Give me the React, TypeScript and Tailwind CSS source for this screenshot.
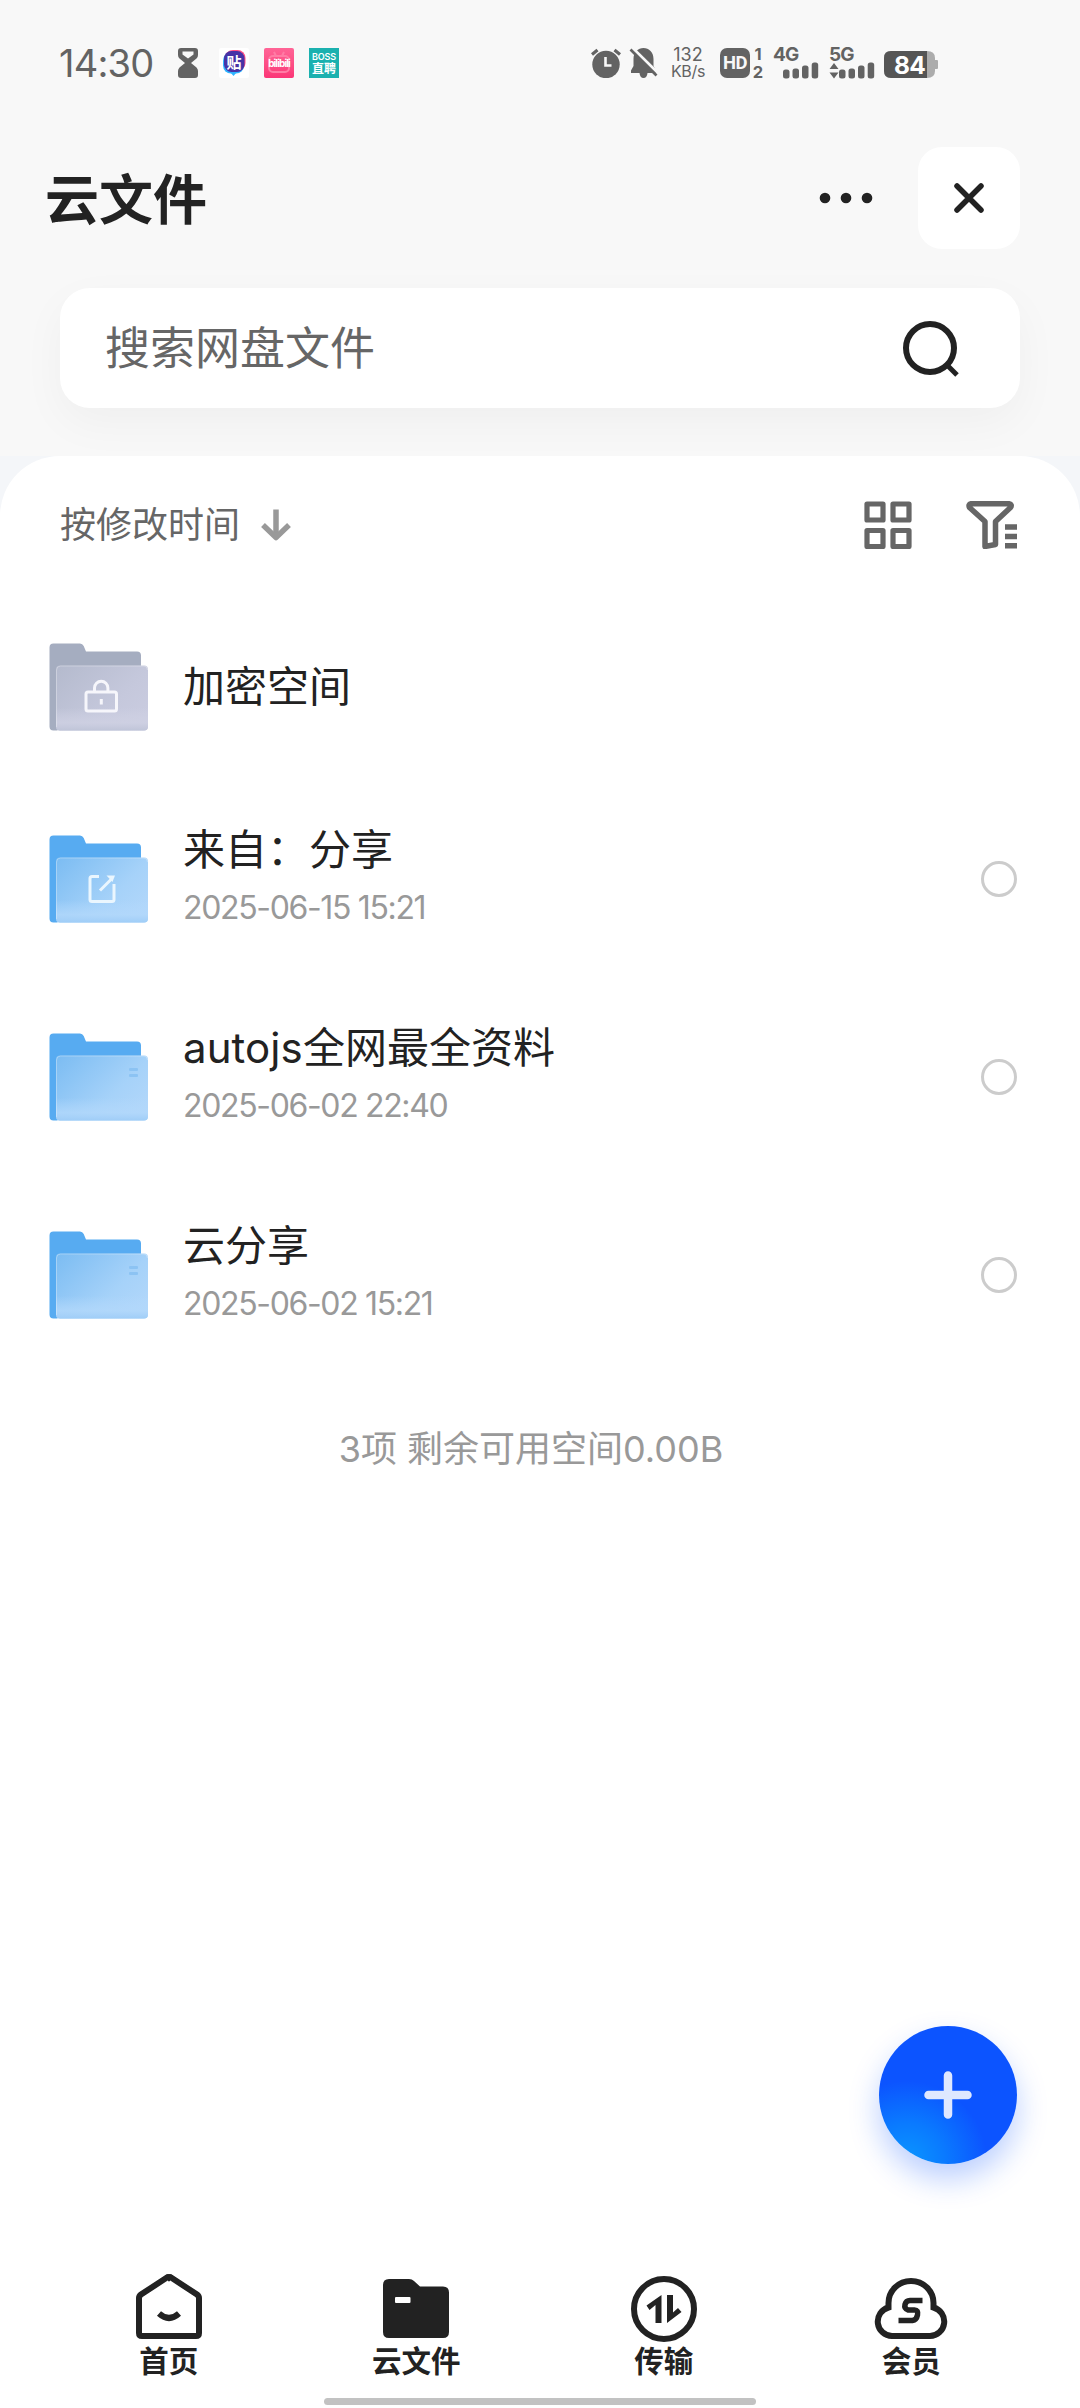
import React from "react";

const CJK = "font-['Inter','Noto_Sans_CJK_SC',sans-serif]";

function SignalBars() {
  return (
    <svg width="36" height="18" viewBox="0 0 36 18" fill="#636363">
      <rect x="0" y="8.5" width="6.5" height="9" rx="2.5" />
      <rect x="9.5" y="7.5" width="6.5" height="10" rx="2.5" />
      <rect x="19" y="4.5" width="6.5" height="13" rx="2.5" />
      <rect x="28.7" y="1.5" width="6.5" height="16" rx="2.5" />
    </svg>
  );
}

function StatusBar() {
  return (
    <div className="flex h-[126px] shrink-0 items-center text-[#636363]">
      <span className="ml-[59px] w-[119px] text-[38px] leading-[38px] tracking-[-0.8px]">14:30</span>
      <svg width="20" height="30" viewBox="0 0 20 30" fill="#636363">
        <path
          fillRule="evenodd"
          d="M3 0H17Q20 0 20 3V7Q20 9 18.500 10.500L13 15L18.500 19.500Q20 21 20 23V27Q20 30 17 30H3Q0 30 0 27V23Q0 21 1.500 19.500L7 15L1.500 10.500Q0 9 0 7V3Q0 0 3 0ZM4.500 3.500V6.500L10 10.500L15.500 6.500V3.500Z"
        />
      </svg>
      <div className="relative ml-[21px] flex size-[30px] items-center justify-center rounded-[2px] bg-white">
        <svg className="absolute inset-0" width="30" height="30" viewBox="0 0 30 30">
          <rect x="6" y="2" width="20.500" height="21" rx="8" fill="#ff4e86" />
          <rect x="4" y="4.500" width="21" height="21" rx="8" fill="#2fb4ff" />
          <path d="M11 24H18L14.500 28Z" fill="#2fb4ff" />
          <rect x="5" y="3" width="20.500" height="21" rx="7.500" fill="#4733a6" />
        </svg>
        <span className="relative -top-px text-[15px] font-bold leading-none text-white">贴</span>
      </div>
      <div className="relative ml-[15px] flex size-[30px] items-center justify-center rounded-[2px] bg-linear-to-b from-[#ff6496] to-[#fb3577]">
        <svg className="absolute inset-0" width="30" height="30" viewBox="0 0 30 30" fill="none" stroke="#ff7ca5" strokeWidth="2">
          <rect x="5" y="8" width="20" height="16" rx="4" />
          <path d="M10 4L12 8M20 4L18 8" />
        </svg>
        <span className="relative text-[10px] font-bold leading-none tracking-[-0.9px] text-white">bilibili</span>
      </div>
      <div className="ml-[15px] flex size-[30px] flex-col items-center justify-center bg-[#1bb1af] text-white">
        <span className="text-[9px] font-semibold leading-[11px] tracking-[-0.1px]">BOSS</span>
        <span className="text-[12px] font-bold leading-[13px]">直聘</span>
      </div>

      <svg className="ml-[252px]" width="30" height="30" viewBox="0 0 30 30">
        <circle cx="15" cy="16.500" r="13.700" fill="#636363" />
        <path d="M1 6.500L6.500 2M29 6.500L23.500 2" stroke="#636363" strokeWidth="3.200" />
        <path d="M14.500 9V17.500H20.500" fill="none" stroke="#f8f8f8" strokeWidth="2.600" />
      </svg>
      <svg className="ml-2" width="30" height="30" viewBox="0 0 30 30">
        <path d="M4.500 11C4.500 4 9 0 14.500 0S24.500 4 24.500 11V18L27 22.500V25H18.500Q18 30 14.500 30T10.500 25H2V22.500L4.500 18Z" fill="#636363" />
        <path d="M3.500 0L31 27" stroke="#f8f8f8" strokeWidth="3" />
        <path d="M1.500 1.500L27.500 27.500" stroke="#636363" strokeWidth="2.600" />
      </svg>
      <div className="ml-[9px] flex w-[40px] flex-col items-center">
        <span className="text-[18px] leading-[17px]">132</span>
        <span className="text-[16px] leading-[17px] tracking-[-0.3px]">KB/s</span>
      </div>
      <div className="ml-[12px] flex size-[30px] items-center justify-center rounded-[7px] bg-[#636363] font-['Roboto',sans-serif] text-[18.5px] font-bold leading-none tracking-[-0.5px] text-[#f8f8f8]">
        HD
      </div>
      <div className="ml-[2px] flex w-[12px] flex-col items-center text-[16.5px] font-bold leading-[18px]">
        <span>1</span>
        <span>2</span>
      </div>
      <div className="ml-[9px] flex h-[34px] w-[47px] flex-col">
        <span className="h-[17px] text-[19px] font-bold leading-[17px] tracking-[-0.8px]">4G</span>
        <span className="-mt-[2px] pl-[10px]">
          <SignalBars />
        </span>
      </div>
      <div className="ml-[9px] flex h-[34px] w-[48px] flex-col">
        <span className="h-[17px] text-[19px] font-bold leading-[17px] tracking-[-0.8px]">5G</span>
        <span className="-mt-[2px] flex">
          <svg width="10" height="18" viewBox="0 0 10 18" fill="#636363">
            <path d="M0.500 8L5 2L9.500 8ZM0.500 11.500H9.500L5 17.500Z" />
          </svg>
          <SignalBars />
        </span>
      </div>
      <div className="relative ml-[7px] mt-[3px] flex h-[27px] w-[54px]">
        <svg className="absolute inset-0" width="54" height="27" viewBox="0 0 54 27">
          <path d="M7 0H43Q51 0 51 7V9H53Q54 9 54 10V17Q54 18 53 18H51V20Q51 27 43 27H7Q0 27 0 20V7Q0 0 7 0Z" fill="#acacac" />
          <path d="M7 0H43V27H7Q0 27 0 20V7Q0 0 7 0Z" fill="#555" />
        </svg>
        <span className="relative ml-[10px] text-[24.5px] font-bold leading-[28px] tracking-[-0.8px] text-white">84</span>
      </div>
    </div>
  );
}

type FolderKind = "lock" | "share" | "plain";

function FolderIcon({ kind, id }: { kind: FolderKind; id: string }) {
  const grey = kind === "lock";
  return (
    <svg width="100" height="88" viewBox="0 0 100 88">
      <defs>
        <linearGradient id={id} x1="0" y1="0" x2="1" y2="0.700">
          <stop offset="0" stopColor={grey ? "#b4bacd" : "#7bbcf2"} />
          <stop offset="0.700" stopColor={grey ? "#c5c8dc" : "#a6d2f9"} />
          <stop offset="1" stopColor={grey ? "#c9cbdf" : "#b0d6fa"} />
        </linearGradient>
        <linearGradient id={id + "-sheen"} x1="0" y1="0" x2="0" y2="1">
          <stop offset="0.650" stopColor={grey ? "#d3d5e6" : "#b4d9fc"} stopOpacity="0" />
          <stop offset="0.880" stopColor={grey ? "#cfd1e3" : "#b2d8fb"} stopOpacity="0.800" />
          <stop offset="1" stopColor={grey ? "#bfc4d8" : "#9fcdf7"} />
        </linearGradient>
      </defs>
      <path
        d="M4.500 0.500H31Q33.500 0.500 34.700 3L37 8.500H88Q92 8.500 92 12.500V50L8 87.500H4.500Q0.500 87.500 0.500 83.500V4.500Q0.500 0.500 4.500 0.500Z"
        fill={grey ? "#a5adc0" : "#57abf1"}
      />
      <rect x="7" y="22.500" width="92" height="65" rx="4" fill={`url(#${id})`} />
      <rect x="7" y="22.500" width="92" height="65" rx="4" fill={`url(#${id}-sheen)`} />
      <path d="M7.500 84V27Q7.500 23 11.500 23H95Q98.500 23 98.500 27" fill="none" stroke="#ffffff" strokeOpacity="0.300" />
      {kind === "lock" && (
        <g fill="none" stroke="#f6f6fb" strokeWidth="3">
          <rect x="37" y="49" width="30.500" height="19" rx="2" />
          <path d="M45.500 49V45A6.700 6.700 0 0 1 58.900 45V49M52.300 56V61.500" />
        </g>
      )}
      {kind === "share" && (
        <g fill="none" stroke="#eaf6fe" strokeWidth="3">
          <path d="M50 41.500H43Q41 41.500 41 43.500V64.500Q41 66.500 43 66.500H63Q65 66.500 65 64.500V49" />
          <path d="M51 55.500L63 43.500" />
          <path d="M57.500 40.500H66L63.500 47Z" fill="#eaf6fe" stroke="none" />
        </g>
      )}
      {kind === "plain" && (
        <g fill="#8cc3f3">
          <rect x="80" y="35" width="9" height="3" rx="1" />
          <rect x="80" y="41" width="9" height="3" rx="1" />
        </g>
      )}
    </svg>
  );
}

function FileRow({ id, kind, latin, name, date }: { id: string; kind: FolderKind; latin?: string; name: string; date: string }) {
  return (
    <div className="flex h-[198px] items-center pl-[49px] pr-[63px]">
      <FolderIcon kind={kind} id={id} />
      <div className="mb-[6px] ml-[34px] flex flex-1 flex-col">
        <span className="text-[42px] leading-[56px] text-[#222]">
          {latin && <span className="tracking-[0.1px]">{latin}</span>}
          {name}
        </span>
        <span className="mt-[8px] text-[32px] leading-[44px] tracking-[-1.35px] text-[#999]">{date}</span>
      </div>
      <span className="size-[36px] rounded-full border-[3.5px] border-[#ccc]" />
    </div>
  );
}

function Tab({ label, children }: { label: string; children: React.ReactNode }) {
  return (
    <div className="flex w-[247.500px] flex-col items-center text-[#222]">
      <svg width="74" height="72" viewBox="0 0 74 72" fill="none" stroke="#222" strokeWidth="6">
        {children}
      </svg>
      <span className="text-[29.500px] font-bold leading-[38px]">{label}</span>
    </div>
  );
}

export default function App() {
  return (
    <div className={`relative flex h-[2408px] w-[1080px] flex-col overflow-hidden bg-[#f8f8f8] ${CJK}`}>
      <StatusBar />

      <header className="mt-[21px] flex h-[102px] shrink-0 items-center pl-[45px] pr-[60px]">
        <h1 className="mt-[6px] flex-1 text-[54px] font-bold leading-[80px] text-[#222]">云文件</h1>
        <svg width="56" height="12" viewBox="0 0 56 12" fill="#222">
          <circle cx="7" cy="6" r="5.300" />
          <circle cx="28" cy="6" r="5.300" />
          <circle cx="49" cy="6" r="5.300" />
        </svg>
        <button className="ml-[44px] flex size-[102px] items-center justify-center rounded-[24px] bg-white">
          <svg width="32" height="32" viewBox="0 0 32 32" stroke="#222" strokeWidth="5.500" strokeLinecap="round">
            <path d="M4 4L28 28M28 4L4 28" />
          </svg>
        </button>
      </header>

      <div className="mx-[60px] mt-[39px] flex h-[120px] shrink-0 items-center justify-between rounded-[30px] bg-white pl-[45px] pr-[58px] shadow-[0_15px_45px_rgba(0,0,0,0.04)]">
        <span className="mt-[2px] text-[45px] leading-[66px] text-[#666]">搜索网盘文件</span>
        <svg width="60" height="60" viewBox="0 0 60 60" fill="none" stroke="#222" strokeWidth="6">
          <circle cx="28" cy="30" r="24" />
          <path d="M45 47L55 57" strokeWidth="5" />
        </svg>
      </div>

      <div className="mt-[48px] flex flex-1 flex-col bg-[#f4f6f9]">
        <main className="flex flex-1 flex-col rounded-t-[60px] bg-white">
          <div className="flex h-[138px] items-center pl-[60px] pr-[62px]">
            <span className="text-[36px] leading-[52px] text-[#666]">按修改时间</span>
            <svg className="ml-[20px]" width="32" height="34" viewBox="0 0 32 34" fill="none" stroke="#999" strokeWidth="5.500">
              <path d="M16 1.500V29" />
              <path d="M3 17L16 29.500L29 17" strokeLinejoin="round" />
            </svg>
            <div className="flex-1" />
            <svg width="48" height="48" viewBox="0 0 48 48" fill="none" stroke="#666" strokeWidth="5.200" strokeLinejoin="round">
              <rect x="3" y="3" width="16" height="16" />
              <rect x="29" y="3" width="16" height="16" />
              <rect x="3" y="29.500" width="16" height="16" />
              <rect x="29" y="29.500" width="16" height="16" />
            </svg>
            <svg className="ml-[54px]" width="52" height="48" viewBox="0 0 52 48" fill="none" stroke="#666" strokeWidth="5.500" strokeLinejoin="round">
              <path d="M5 2.800H43Q46.500 3.500 44.500 6.500L29.500 20.500V43.500L19 45.500V20.500L3.500 6.500Q2 3.500 5 2.800Z" />
              <path d="M39 26H51M39 35.500H51M39 44.700H51" />
            </svg>
          </div>

          <div className="flex h-[186px] items-center pl-[49px]">
            <FolderIcon kind="lock" id="f-lock" />
            <span className="ml-[34px] text-[42px] leading-[56px] text-[#222]">加密空间</span>
          </div>
          <FileRow id="f-share" kind="share" name="来自：分享" date="2025-06-15 15:21" />
          <FileRow id="f-auto" kind="plain" latin="autojs" name="全网最全资料" date="2025-06-02 22:40" />
          <FileRow id="f-cloud" kind="plain" name="云分享" date="2025-06-02 15:21" />

          <p className="flex h-[150px] items-center justify-center pr-[18px] text-[36px] text-[#999]">3项 剩余可用空间0.00B</p>
          <div className="flex-1" />

          <nav className="flex h-[138px] justify-center">
            <Tab label="首页">
              <path d="M37 7.500Q38 6.500 39 7.500L65 24.500Q67 26 67 28V63Q67 66 64 66H10Q7 66 7 63V28Q7 26 9 24.500L35 7.500Q36 6.500 37 7.500Z" />
              <path d="M27 43.500Q37 52.500 47 43.500" />
            </Tab>
            <Tab label="云文件">
              <path
                d="M10 9H30Q33 9 35 11L41 16.500H64Q70 16.500 70 22.500V62Q70 68 64 68H10Q4 68 4 62V15Q4 9 10 9Z"
                fill="#222"
                stroke="none"
              />
              <rect x="16" y="27" width="15.500" height="6" rx="1" fill="#fff" stroke="none" />
            </Tab>
            <Tab label="传输">
              <circle cx="37" cy="39" r="30" />
              <path d="M19.500 35.500L34.500 25V53H28.500V35L22.500 40Z" fill="#222" stroke="none" />
              <path d="M40 25H46V42.500L51 38L54.500 42L40 53Z" fill="#222" stroke="none" />
            </Tab>
            <Tab label="会员">
              <path d="M18 66A14.500 14.500 0 0 1 14.500 37.500V33A22.500 22 0 0 1 59.500 33V37.500A14.500 14.500 0 0 1 56 66Z" strokeLinejoin="miter" />
              <path d="M48.500 30.500H36Q32 30.500 31 34.500T34 40H40.500Q44.500 40 43.500 45T38.500 50.500H24.500" strokeWidth="5.500" />
            </Tab>
          </nav>
        </main>
      </div>

      <button className="absolute left-[879px] top-[2026px] flex size-[138px] items-center justify-center rounded-full bg-[radial-gradient(circle_at_20%_98%,#0a96ff_0%,#0a7aff_22%,#0c54ff_46%)] shadow-[0_15px_30px_rgba(12,84,255,0.28)]">
        <svg width="48" height="48" viewBox="0 0 48 48" stroke="#dfe8ff" strokeWidth="8.500" strokeLinecap="round">
          <path d="M24 4.500V43.500M4.500 24H43.500" />
        </svg>
      </button>
      <div className="absolute bottom-[3px] left-[324px] h-[7px] w-[432px] rounded-full bg-[#c2c2c2]" />
    </div>
  );
}
